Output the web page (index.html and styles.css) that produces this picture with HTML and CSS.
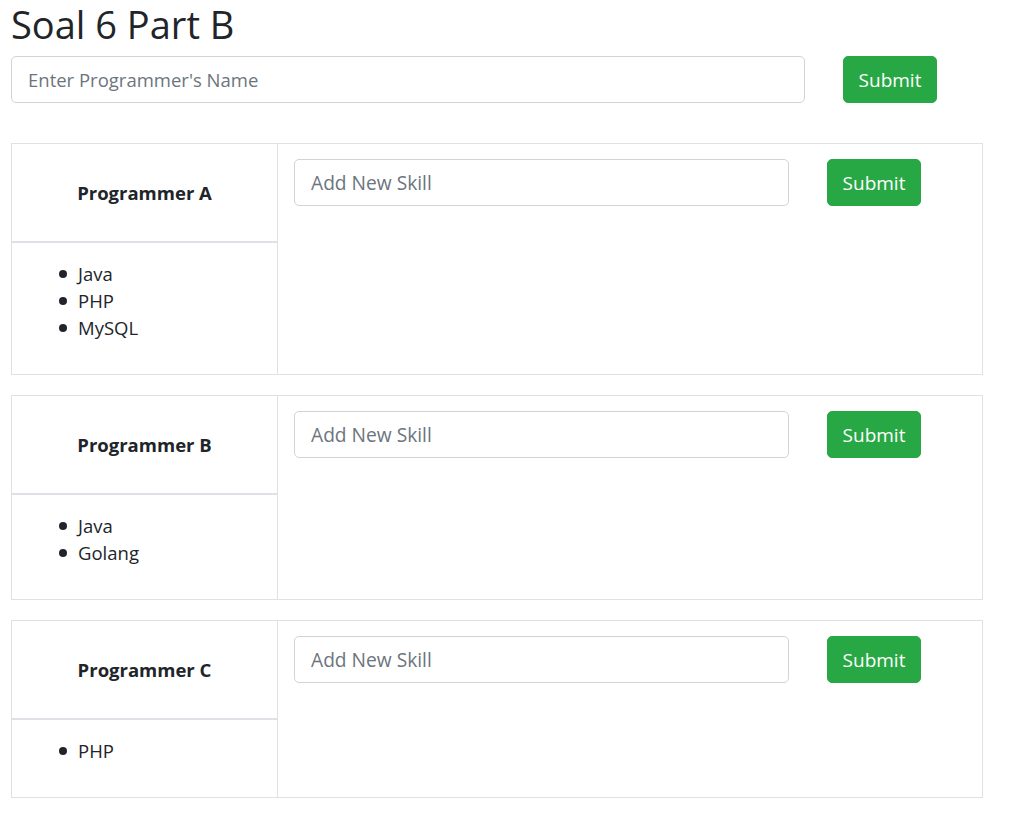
FILE: index.html
```html
<!DOCTYPE html>
<html>
<head>
<meta charset="utf-8">
<title>Soal 6 Part B</title>
<link rel="stylesheet" href="styles.css">
</head>
<body>
<div class="page">
  <h1 class="title">Soal 6 Part B</h1>
  <form class="row-top">
    <input class="field field-main" type="text" placeholder="Enter Programmer's Name">
    <button class="btn" type="button">Submit</button>
  </form>

  <div class="card">
    <div class="name">Programmer A</div>
    <div class="skills">
      <ul>
        <li>Java</li>
        <li>PHP</li>
        <li>MySQL</li>
      </ul>
    </div>
    <div class="add">
      <input class="field field-skill" type="text" placeholder="Add New Skill">
      <button class="btn" type="button">Submit</button>
    </div>
  </div>

  <div class="card">
    <div class="name">Programmer B</div>
    <div class="skills">
      <ul>
        <li>Java</li>
        <li>Golang</li>
      </ul>
    </div>
    <div class="add">
      <input class="field field-skill" type="text" placeholder="Add New Skill">
      <button class="btn" type="button">Submit</button>
    </div>
  </div>

  <div class="card">
    <div class="name">Programmer C</div>
    <div class="skills">
      <ul>
        <li>PHP</li>
      </ul>
    </div>
    <div class="add">
      <input class="field field-skill" type="text" placeholder="Add New Skill">
      <button class="btn" type="button">Submit</button>
    </div>
  </div>
</div>
</body>
</html>
```

FILE: styles.css
```css
html, body {
  margin: 0;
  padding: 0;
  background: #ffffff;
}

body {
  font-family: "Open Sans", "Noto Sans", sans-serif;
  color: #212529;
}

.page {
  padding: 0 0 0 11px;
}

.title {
  margin: 0 0 8px 0;
  font-size: 38px;
  font-weight: 400;
  line-height: 48px;
}

.row-top {
  display: flex;
  align-items: flex-start;
  margin: 0 0 40px 0;
}

.field {
  box-sizing: border-box;
  height: 47px;
  border: 1px solid #ced4da;
  border-radius: 5px;
  padding: 0 16px;
  font-family: inherit;
  font-size: 19.2px;
  color: #495057;
  background: #fff;
  outline: none;
}

.field::placeholder {
  color: #6c757d;
  opacity: 1;
}

.field-main {
  width: 794px;
  margin-right: 38px;
  font-size: 18.5px;
}

.field-skill {
  width: 495px;
  margin-right: 38px;
}

.field-skill:first-child {
  margin-left: 1px;
}

.btn {
  box-sizing: border-box;
  height: 47px;
  width: 94px;
  border: 1px solid #28a745;
  border-radius: 5px;
  background: #28a745;
  color: #fff;
  font-family: inherit;
  font-size: 19px;
  padding: 0;
  cursor: pointer;
}

.card {
  display: grid;
  grid-template-columns: 266px 1fr;
  grid-template-rows: auto 1fr;
  width: 970px;
  border: 1px solid #dee2e6;
  margin-bottom: 20px;
}

.name {
  grid-column: 1;
  grid-row: 1;
  height: 97px;
  display: flex;
  align-items: center;
  justify-content: center;
  border-right: 1px solid #dee2e6;
  border-bottom: 2px solid #dee2e6;
  font-weight: 700;
  font-size: 18.5px;
}

.skills {
  grid-column: 1;
  grid-row: 2;
  border-right: 1px solid #dee2e6;
  padding: 17px 12px 17px 47px;
  font-size: 18.5px;
}

.skills ul {
  margin: 0 0 16px 0;
  padding: 0;
  list-style: none;
  line-height: 27px;
}

.skills li {
  display: flex;
  align-items: center;
}

.skills li::before {
  content: "";
  width: 8px;
  height: 8px;
  border-radius: 50%;
  background: #212529;
  margin-right: 11px;
  flex: none;
}

.add {
  grid-column: 2;
  grid-row: 1 / span 2;
  display: flex;
  align-items: flex-start;
  padding: 15px;
}
```
